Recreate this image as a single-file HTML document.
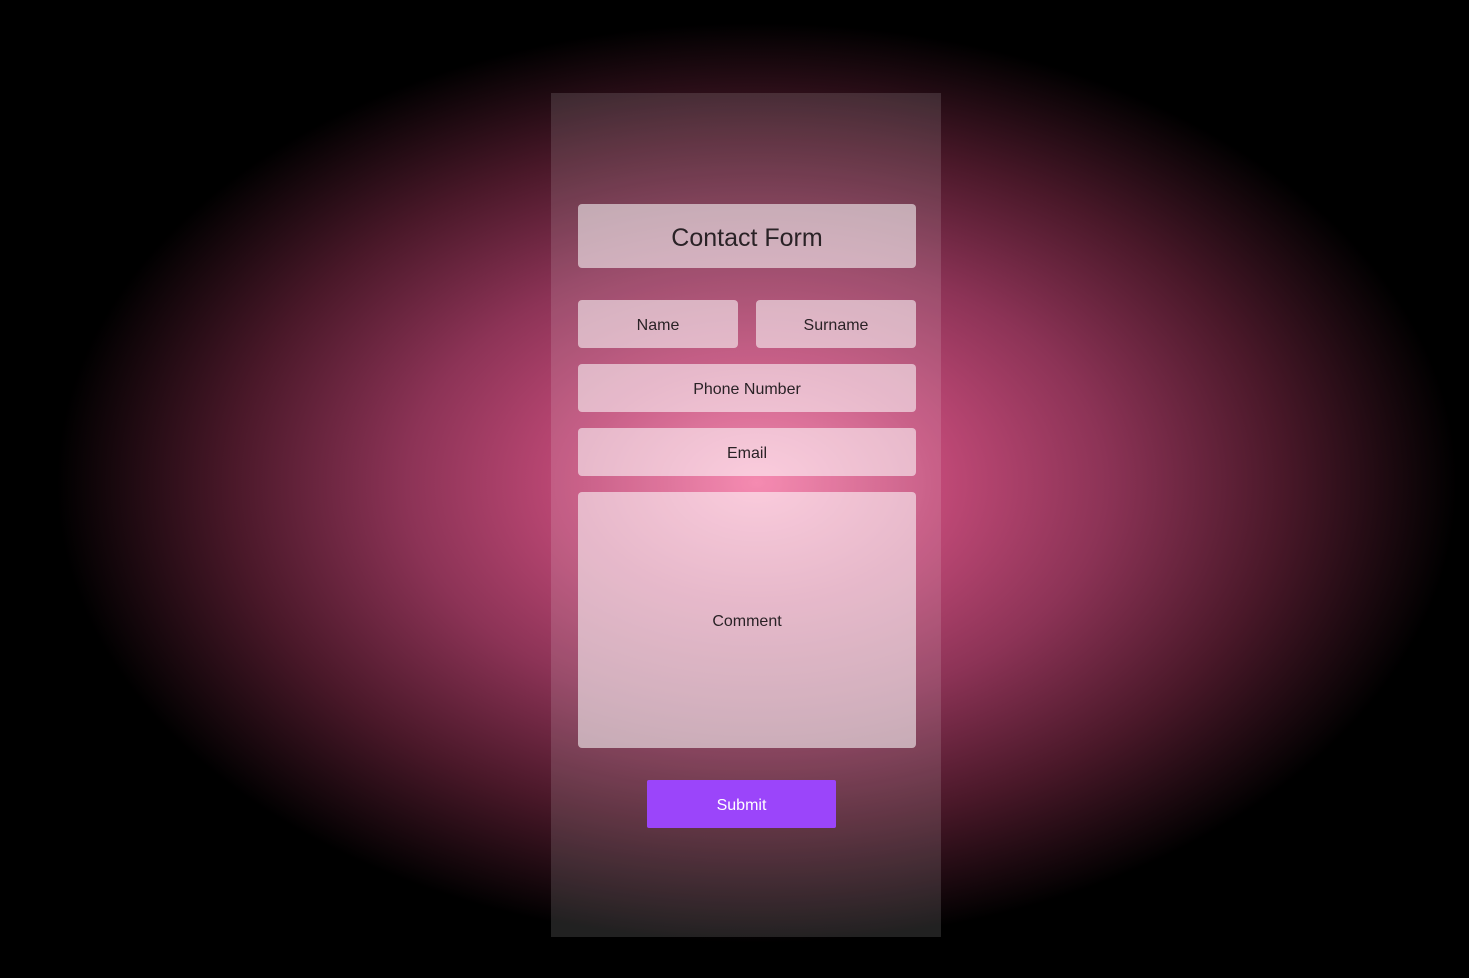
<!DOCTYPE html>
<html><head><style>
html,body{margin:0;padding:0;width:1469px;height:978px;overflow:hidden;}
body{background:radial-gradient(ellipse 700px 460px at 757px 483px,#f47aa6 0%,#c24a78 25%,#8c3356 50%,#4a1829 75%,#000 100%);font-family:"Liberation Sans",sans-serif;position:relative;}
.panel{position:absolute;left:551px;top:93px;width:390px;height:844px;background:rgba(255,255,255,0.13);}
.box{position:absolute;box-sizing:border-box;padding-top:3px;background:rgba(255,255,255,0.56);border-radius:4px;display:flex;align-items:center;justify-content:center;color:#2a2226;font-size:16px;}
.btn{position:absolute;box-sizing:border-box;padding-top:3px;left:647px;top:780px;width:189px;height:48px;background:#9b45fa;border-radius:2px;color:#fff;font-size:16px;display:flex;align-items:center;justify-content:center;}
</style></head><body>
<div class="panel"></div>
<div class="box" style="left:578px;top:204px;width:338px;height:64px;font-size:25px;padding-top:4px;">Contact Form</div>
<div class="box" style="left:578px;top:300px;width:160px;height:48px;">Name</div>
<div class="box" style="left:756px;top:300px;width:160px;height:48px;">Surname</div>
<div class="box" style="left:578px;top:364px;width:338px;height:48px;">Phone Number</div>
<div class="box" style="left:578px;top:428px;width:338px;height:48px;">Email</div>
<div class="box" style="left:578px;top:492px;width:338px;height:256px;">Comment</div>
<div class="btn">Submit</div>
</body></html>
